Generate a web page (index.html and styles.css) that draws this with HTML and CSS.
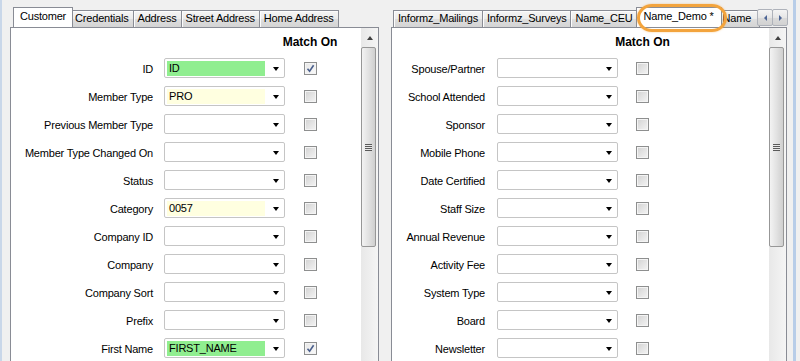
FILE: index.html
```html
<!DOCTYPE html>
<html lang="en">
  <head>
    <meta charset="UTF-8" />
    <title>Field Mapping</title>
    <link rel="stylesheet" href="styles.css">
  </head>
  <body>
    <div class="window">
      <!-- left tab control -->
      <div class="tabctl left">
        <div class="tabstrip">
          <span class="tab active">Customer</span>
          <span class="tab">Credentials</span>
          <span class="tab">Address</span>
          <span class="tab">Street Address</span>
          <span class="tab">Home Address</span>
        </div>
        <div class="page">
          <div class="form">
            <div class="head">Match On</div>

            <label class="lbl">ID</label>
            <div class="combo"><span class="val green">ID</span><i class="arrow"></i></div>
            <span class="chk checked"><svg width="9" height="9" viewBox="0 0 9 9"><path d="M1.5 4.8 3.6 7.2 7.6 1.2" fill="none" stroke="#4a5f8c" stroke-width="1.6"/></svg></span>

            <label class="lbl">Member Type</label>
            <div class="combo"><span class="val yellow">PRO</span><i class="arrow"></i></div>
            <span class="chk"></span>

            <label class="lbl">Previous Member Type</label>
            <div class="combo"><span class="val"></span><i class="arrow"></i></div>
            <span class="chk"></span>

            <label class="lbl">Member Type Changed On</label>
            <div class="combo"><span class="val"></span><i class="arrow"></i></div>
            <span class="chk"></span>

            <label class="lbl">Status</label>
            <div class="combo"><span class="val"></span><i class="arrow"></i></div>
            <span class="chk"></span>

            <label class="lbl">Category</label>
            <div class="combo"><span class="val yellow">0057</span><i class="arrow"></i></div>
            <span class="chk"></span>

            <label class="lbl">Company ID</label>
            <div class="combo"><span class="val"></span><i class="arrow"></i></div>
            <span class="chk"></span>

            <label class="lbl">Company</label>
            <div class="combo"><span class="val"></span><i class="arrow"></i></div>
            <span class="chk"></span>

            <label class="lbl">Company Sort</label>
            <div class="combo"><span class="val"></span><i class="arrow"></i></div>
            <span class="chk"></span>

            <label class="lbl">Prefix</label>
            <div class="combo"><span class="val"></span><i class="arrow"></i></div>
            <span class="chk"></span>

            <label class="lbl">First Name</label>
            <div class="combo"><span class="val green">FIRST_NAME</span><i class="arrow"></i></div>
            <span class="chk checked"><svg width="9" height="9" viewBox="0 0 9 9"><path d="M1.5 4.8 3.6 7.2 7.6 1.2" fill="none" stroke="#4a5f8c" stroke-width="1.6"/></svg></span>
          </div>
          <div class="vscroll">
            <div class="sbtn"><i class="up"></i></div>
            <div class="thumb"><i class="grip"></i></div>
          </div>
        </div>
      </div>

      <!-- right tab control -->
      <div class="tabctl right">
        <div class="tabstrip">
          <span class="tab">Informz_Mailings</span>
          <span class="tab">Informz_Surveys</span>
          <span class="tab">Name_CEU</span>
          <span class="tab active">Name_Demo *</span>
          <span class="tab partial">Name</span>
        </div>
        <div class="tabscroll">
          <span class="tsbtn"><i class="tri-left"></i></span>
          <span class="tsbtn"><i class="tri-right"></i></span>
        </div>
        <div class="highlight"></div>
        <div class="page">
          <div class="form">
            <div class="head">Match On</div>

            <label class="lbl">Spouse/Partner</label>
            <div class="combo"><span class="val"></span><i class="arrow"></i></div>
            <span class="chk"></span>

            <label class="lbl">School Attended</label>
            <div class="combo"><span class="val"></span><i class="arrow"></i></div>
            <span class="chk"></span>

            <label class="lbl">Sponsor</label>
            <div class="combo"><span class="val"></span><i class="arrow"></i></div>
            <span class="chk"></span>

            <label class="lbl">Mobile Phone</label>
            <div class="combo"><span class="val"></span><i class="arrow"></i></div>
            <span class="chk"></span>

            <label class="lbl">Date Certified</label>
            <div class="combo"><span class="val"></span><i class="arrow"></i></div>
            <span class="chk"></span>

            <label class="lbl">Staff Size</label>
            <div class="combo"><span class="val"></span><i class="arrow"></i></div>
            <span class="chk"></span>

            <label class="lbl">Annual Revenue</label>
            <div class="combo"><span class="val"></span><i class="arrow"></i></div>
            <span class="chk"></span>

            <label class="lbl">Activity Fee</label>
            <div class="combo"><span class="val"></span><i class="arrow"></i></div>
            <span class="chk"></span>

            <label class="lbl">System Type</label>
            <div class="combo"><span class="val"></span><i class="arrow"></i></div>
            <span class="chk"></span>

            <label class="lbl">Board</label>
            <div class="combo"><span class="val"></span><i class="arrow"></i></div>
            <span class="chk"></span>

            <label class="lbl">Newsletter</label>
            <div class="combo"><span class="val"></span><i class="arrow"></i></div>
            <span class="chk"></span>
          </div>
          <div class="vscroll">
            <div class="sbtn"><i class="up"></i></div>
            <div class="thumb"><i class="grip"></i></div>
          </div>
        </div>
      </div>

      <div class="edge"></div>
    </div>
  </body>
</html>
```

FILE: styles.css
```css
html,
body {
  height: 361px;
  overflow: hidden;
}

body {
  margin: 0;
  background-color: #f0f0f0;
  font-family: "Liberation Sans", Arial, sans-serif;
  font-size: 11px;
  letter-spacing: -0.2px;
  color: #000;
}

.window {
  display: flex;
  height: 361px;
  overflow: hidden;
  padding-left: 8px;
  border-left: 2px solid #c9d7e9;
}

.tabctl {
  position: relative;
  display: flex;
  flex-direction: column;
  padding-top: 7px;
}

.tabctl.left {
  width: 369px;
  margin-right: 12px;
}

.tabctl.right {
  width: 396px;
}

/* tabs */
.tabstrip {
  display: flex;
  flex: none;
  align-items: flex-end;
  height: 20px;
  padding-left: 2px;
  overflow: hidden;
  white-space: nowrap;
}

.tab {
  box-sizing: border-box;
  height: 17px;
  line-height: 15px;
  padding: 0 4px;
  margin-left: -1px;
  border: 1px solid #898c95;
  border-bottom: none;
  background: linear-gradient(to bottom, #f5f5f5, #ebebeb 50%, #dedede 51%, #d4d4d4);
  box-shadow: inset 1px 1px 0 #fcfcfc;
}

.tab:first-child {
  margin-left: 0;
}

.tab.active {
  position: relative;
  z-index: 1;
  height: 21px;
  line-height: 17px;
  margin: 0 -2px -1px;
  padding: 0 6px;
  background: #fff;
  box-shadow: none;
}

.tab.active:first-child {
  margin-left: 1px;
}

.right .tab.active {
  padding: 0 7px;
}

.tab.partial {
  padding: 0 8px 0 3px;
}

.tabscroll {
  position: absolute;
  top: 9px;
  right: -1px;
  display: flex;
  z-index: 2;
}

.tsbtn {
  box-sizing: border-box;
  width: 16px;
  height: 17px;
  margin-left: -1px;
  display: flex;
  align-items: center;
  justify-content: center;
  border: 1px solid #aeb2ba;
  border-radius: 2px;
  background: linear-gradient(to bottom, #f4f4f4, #e6e6e6 50%, #dadada 51%, #d2d2d2);
}

.tri-left,
.tri-right {
  width: 0;
  height: 0;
  border-top: 3.5px solid transparent;
  border-bottom: 3.5px solid transparent;
}

.tri-left {
  border-right: 3px solid #4d6595;
}

.tri-right {
  border-left: 3px solid #4d6595;
}

.highlight {
  position: absolute;
  z-index: 3;
  left: 246px;
  top: 4px;
  width: 90px;
  height: 28px;
  box-sizing: border-box;
  border: 3px solid #f3a43d;
  border-radius: 15px / 14px;
  box-shadow: 0 0 2px rgba(243, 164, 61, 0.6);
}

/* page */
.page {
  flex: 1;
  min-height: 0;
  overflow: hidden;
  display: flex;
  background: #fff;
  border: 1px solid #898c95;
  border-bottom: none;
}

.form {
  flex: 1;
  display: grid;
  grid-template-columns: 153px 121px 50px;
  grid-template-rows: 26px;
  grid-auto-rows: 28px;
  align-items: center;
  align-content: start;
}

.right .form {
  grid-template-columns: 105px 121px 49px;
}

.head {
  grid-column: 3;
  justify-self: center;
  white-space: nowrap;
  font-size: 12px;
  font-weight: bold;
  letter-spacing: 0;
  padding-top: 2px;
}

.lbl {
  text-align: right;
  padding-right: 11px;
  white-space: nowrap;
  padding-top: 1px;
}

.right .lbl {
  padding-right: 12px;
}

.combo {
  box-sizing: border-box;
  height: 20px;
  display: flex;
  align-items: flex-start;
  padding: 2px 2px 1px;
  border: 1px solid #c5c5c5;
  border-radius: 2px;
  background: #fff;
}

.val {
  width: 98px;
  height: 15px;
  line-height: 15px;
  padding-left: 2px;
  box-sizing: border-box;
}

.val.green {
  background: #90ee90;
}

.val.yellow {
  background: #ffffe0;
}

.arrow {
  width: 0;
  height: 0;
  margin: 6px 3px 0 auto;
  border-left: 3.5px solid transparent;
  border-right: 3.5px solid transparent;
  border-top: 4px solid #000;
}

.chk {
  justify-self: center;
  box-sizing: border-box;
  width: 13px;
  height: 13px;
  display: flex;
  align-items: center;
  justify-content: center;
  border: 1px solid #8e8f8f;
  background: linear-gradient(135deg, #d2d2d2, #f4f4f4);
  box-shadow: inset 0 0 0 1px #f4f4f4;
}

.chk.checked {
  background: linear-gradient(135deg, #e6e6e6, #fafafa);
}

/* scrollbar */
.vscroll {
  width: 17px;
  background: linear-gradient(to right, #e8e8e8, #f5f5f5);
}

.sbtn {
  height: 18px;
  display: flex;
  align-items: center;
  justify-content: center;
}

.up {
  width: 0;
  height: 0;
  margin-top: 2px;
  border-left: 3.5px solid transparent;
  border-right: 3.5px solid transparent;
  border-bottom: 4px solid #404040;
}

.thumb {
  box-sizing: border-box;
  width: 15px;
  height: 200px;
  margin-top: 1px;
  display: flex;
  align-items: center;
  justify-content: center;
  border: 1px solid #979797;
  border-radius: 2px;
  background: linear-gradient(to right, #f3f3f3, #e2e2e2 50%, #cfcfcf);
}

.grip {
  width: 7px;
  height: 7px;
  background: repeating-linear-gradient(to bottom, #5a5a5a 0 1px, #e8e8e8 1px 2px);
}

.right .vscroll {
  margin-left: -2px;
}

.edge {
  width: 3px;
  margin-left: 6px;
  background: #b8cde8;
}
```
